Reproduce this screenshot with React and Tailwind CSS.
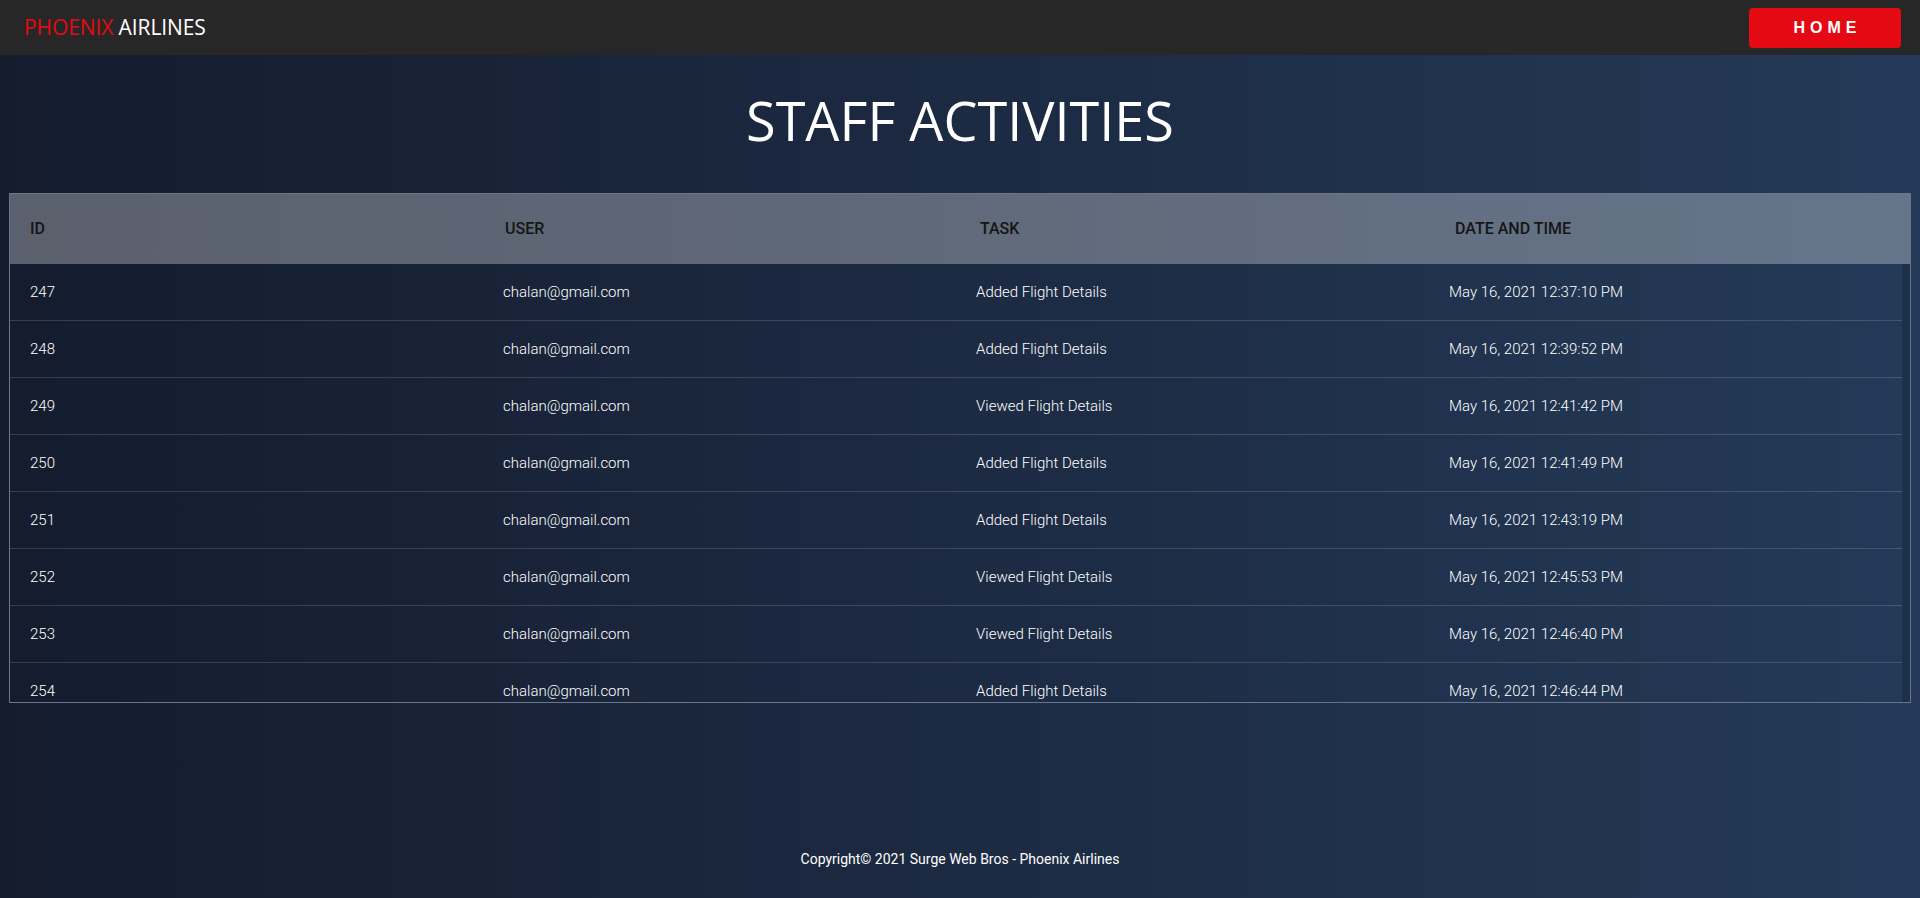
import React from "react";

const activities = [
  { id: 247, user: "chalan@gmail.com", task: "Added Flight Details", time: "May 16, 2021 12:37:10 PM" },
  { id: 248, user: "chalan@gmail.com", task: "Added Flight Details", time: "May 16, 2021 12:39:52 PM" },
  { id: 249, user: "chalan@gmail.com", task: "Viewed Flight Details", time: "May 16, 2021 12:41:42 PM" },
  { id: 250, user: "chalan@gmail.com", task: "Added Flight Details", time: "May 16, 2021 12:41:49 PM" },
  { id: 251, user: "chalan@gmail.com", task: "Added Flight Details", time: "May 16, 2021 12:43:19 PM" },
  { id: 252, user: "chalan@gmail.com", task: "Viewed Flight Details", time: "May 16, 2021 12:45:53 PM" },
  { id: 253, user: "chalan@gmail.com", task: "Viewed Flight Details", time: "May 16, 2021 12:46:40 PM" },
  { id: 254, user: "chalan@gmail.com", task: "Added Flight Details", time: "May 16, 2021 12:46:44 PM" },
];

const headers = ["ID", "USER", "TASK", "DATE AND TIME"];

const Navbar = () => (
  <nav className="h-[55px] bg-[#272727] flex items-center justify-between pl-6 pr-[19px]">
    <span className="font-['Open_Sans',sans-serif] text-[21px] font-medium tracking-[-0.1px]">
      <span className="text-[#e50914]">PHOENIX</span>{" "}
      <span className="text-white">AIRLINES</span>
    </span>
    <button className="w-[152px] h-10 rounded bg-[#e50914] text-white font-['Liberation_Sans',Arial,sans-serif] font-bold text-[16px] tracking-[5px] pl-[5px]">
      HOME
    </button>
  </nav>
);

const ActivityTable = () => (
  <div className="mx-[9px] border border-[#6b7689] font-['Roboto',sans-serif]">
    <div className="h-[70px] bg-white/30 grid grid-cols-4 items-center">
      {headers.map((h) => (
        <div key={h} className="px-5 text-[16px] font-medium text-[#151515]">
          {h}
        </div>
      ))}
    </div>
    <div className="h-[438px] flex">
      <div className="flex-1 overflow-hidden">
        {activities.map((a, i) => (
          <div
            key={a.id}
            className={
              "h-[57px] grid grid-cols-4 items-center text-[15px] font-light text-white " +
              (i < activities.length - 1 ? "border-b border-white/15" : "")
            }
          >
            <div className="px-5">{a.id}</div>
            <div className="px-5">{a.user}</div>
            <div className="px-5">{a.task}</div>
            <div className="px-5">{a.time}</div>
          </div>
        ))}
      </div>
      <div className="w-[8px] bg-black/15" />
    </div>
  </div>
);

export default function App() {
  return (
    <div className="min-h-screen flex flex-col bg-linear-to-r from-[#141c2e] via-[#1c2a42] to-[#243a58]">
      <Navbar />
      <h1 className="pt-[20px] pb-[28px] text-center text-white text-[54px] leading-[90px] font-['Open_Sans',sans-serif]">
        STAFF ACTIVITIES
      </h1>
      <ActivityTable />
      <footer className="mt-auto pb-[28px] text-center text-white text-[14px] font-['Roboto',sans-serif]">
        Copyright© 2021 Surge Web Bros - Phoenix Airlines
      </footer>
    </div>
  );
}
